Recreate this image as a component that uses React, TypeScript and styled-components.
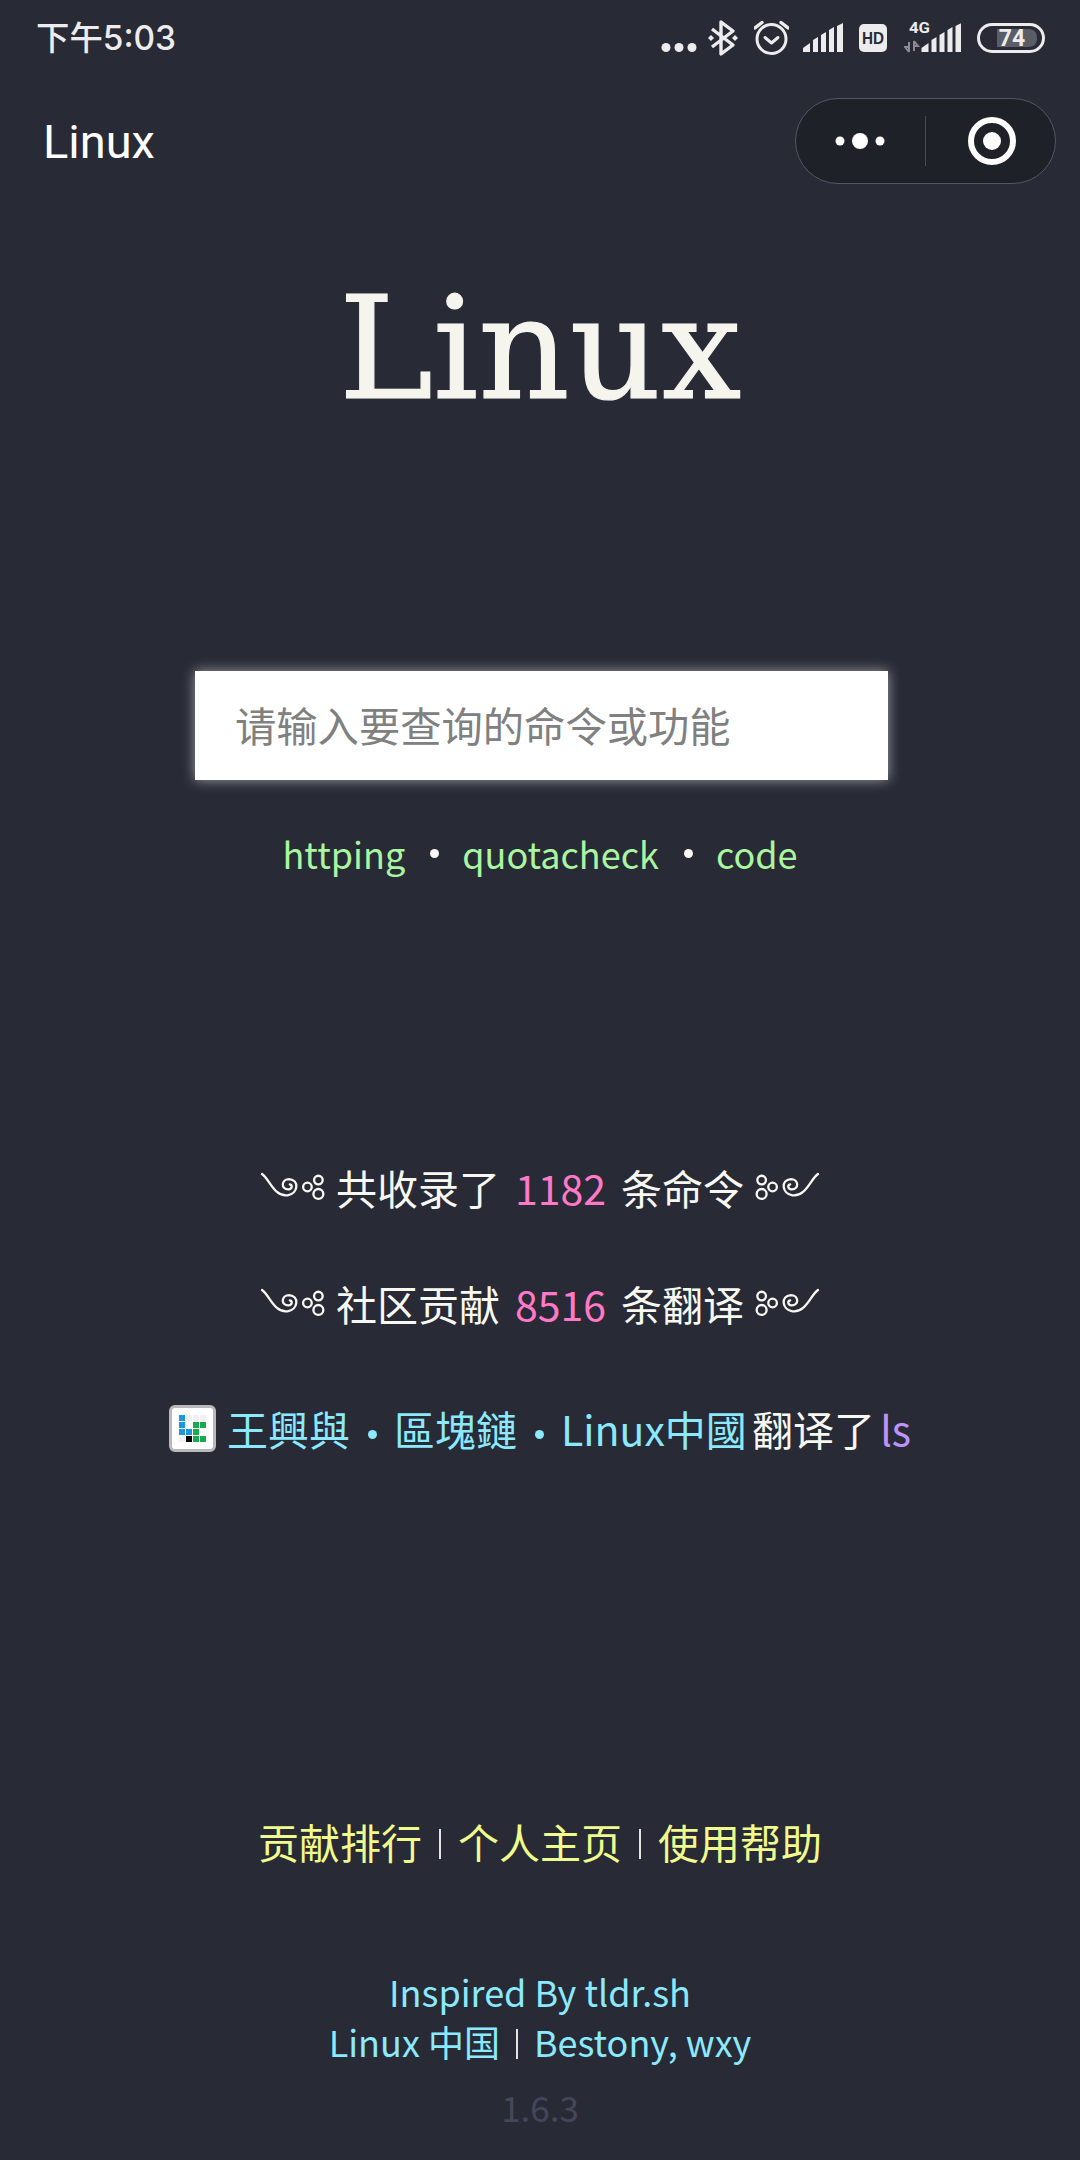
import React from 'react';
import styled, { createGlobalStyle } from 'styled-components';

const CJK = `"Noto Sans CJK SC", "Noto Sans", sans-serif`;

const Global = createGlobalStyle`
  html, body { margin: 0; padding: 0; background: #282a36; }
  * { box-sizing: border-box; }
`;

const Page = styled.div`
  width: 1080px;
  height: 2160px;
  background: #282a36;
  overflow: hidden;
  display: flex;
  flex-direction: column;
  align-items: center;
  font-family: ${CJK};
  color: #f8f8f2;
`;

const StatusBar = styled.div`
  width: 100%;
  height: 76px;
  display: flex;
  align-items: center;
  justify-content: space-between;
  padding: 0 35px 0 36px;
`;

const Clock = styled.div`
  font-family: Inter, ${CJK};
  font-size: 33.4px;
  font-weight: 500;
  color: #ececec;
  line-height: 1;
  padding-top: 2px;
`;

const StatusIcons = styled.div`
  display: flex;
  align-items: center;
  height: 76px;
`;

const StatusSvg = styled.svg<{ $ml: number }>`
  display: block;
  margin-left: ${p => p.$ml}px;
  flex: none;
`;

const NavBar = styled.div`
  width: 100%;
  height: 130px;
  display: flex;
  align-items: flex-start;
  justify-content: space-between;
  padding: 22px 24px 0 43px;
`;

const NavTitle = styled.div`
  font-family: Roboto, sans-serif;
  font-size: 47px;
  line-height: 88px;
  color: #fff;
`;

const Capsule = styled.div`
  width: 261px;
  height: 86px;
  border-radius: 43px;
  border: 1.5px solid #55575f;
  background: #1f2129;
  display: flex;
  align-items: center;
`;

const CapsuleSide = styled.div<{ $pad?: string }>`
  flex: 1;
  height: 100%;
  display: flex;
  align-items: center;
  justify-content: center;
  padding: ${p => p.$pad ?? '0'};
`;

const CapsuleDivider = styled.div`
  width: 1px;
  height: 50px;
  background: #4a4c55;
`;

const Title = styled.h1`
  margin: 58px 0 0;
  font-family: "DejaVu Serif", serif;
  font-weight: 400;
  font-size: 142px;
  line-height: 170px;
  color: #f5f5ee;
  -webkit-text-stroke: 1.2px #f5f5ee;
`;

const SearchBox = styled.div`
  margin: 237px 0 0 3px;
  width: 693px;
  height: 109px;
  background: #fff;
  box-shadow: 0 0 12px rgba(255, 255, 255, 0.55);
  display: flex;
  align-items: center;
  padding: 0 0 3px 40px;
  font-size: 41.3px;
  color: #808080;
`;

const Hints = styled.div`
  margin-top: 45px;
  display: flex;
  align-items: center;
  font-size: 36px;
  line-height: 56px;
  color: #a9f5a0;
`;

const HintDot = styled.span`
  width: 9px;
  height: 9px;
  border-radius: 50%;
  background: #f8f8f2;
  margin: 0 23px 0 25px;
`;

const Stat = styled.div<{ $mt: number }>`
  margin-top: ${p => p.$mt}px;
  display: flex;
  align-items: center;
  font-size: 41px;
  line-height: 60px;
`;

const Num = styled.span`
  color: #ff79c6;
  margin: 0 15px 0 15px;
`;

const FlourishSvg = styled.svg<{ $flip?: boolean }>`
  display: block;
  width: 65px;
  height: 30px;
  margin: ${p => (p.$flip ? '0 0 0 11px' : '0 11px 0 0')};
  transform: ${p => (p.$flip ? 'scaleX(-1)' : 'none')};
`;

const Recent = styled.div`
  margin-top: 65px;
  display: flex;
  align-items: center;
  font-size: 41px;
  line-height: 60px;
  word-spacing: -4px;
`;

const Avatar = styled.div`
  width: 47px;
  height: 47px;
  border: 3px solid #b9b9b9;
  border-radius: 6px;
  background: #fff;
  margin-right: 11px;
  display: grid;
  grid-template-columns: repeat(4, 6px);
  grid-auto-rows: 6px;
  gap: 1px;
  justify-content: center;
  align-content: center;
`;

const Tile = styled.i<{ $c: string }>`
  display: block;
  background: ${p => p.$c};
`;

const Cyan = styled.span`
  color: #8be9fd;
`;

const Sep = styled.span`
  display: inline-block;
  width: 9px;
  height: 9px;
  border-radius: 50%;
  background: #8be9fd;
  margin: 0 17px 0 18px;
  vertical-align: middle;
`;

const Purple = styled.span`
  color: #bd93f9;
`;

const Links = styled.div`
  margin-top: 353px;
  display: flex;
  align-items: center;
  font-size: 41px;
  line-height: 60px;
  color: #f1fa8c;
`;

const VBar = styled.span<{ $h: number; $m: number }>`
  display: inline-block;
  width: 2px;
  height: ${p => p.$h}px;
  background: #e4e4e0;
  margin: 5px ${p => p.$m}px 0;
`;

const Credits = styled.div`
  margin-top: 95px;
  display: flex;
  flex-direction: column;
  align-items: center;
  font-size: 36px;
  line-height: 50px;
  color: #8be9fd;
`;

const CreditRow = styled.div`
  display: flex;
  align-items: center;
`;

const Version = styled.div`
  margin-top: 18px;
  font-size: 35px;
  line-height: 46px;
  color: #44475a;
`;

const Flourish = ({ flip }: { flip?: boolean }) => (
  <FlourishSvg $flip={flip} viewBox="62 92 196 88" fill="none" stroke="#f8f8f2" strokeWidth="7" strokeLinecap="round">
    <path d="M68 97C92 114 105 166 145 161C177 156 182 114 150 112C125 112 124 145 149 143C160 141 160 130 152 128" />
    <circle cx="205" cy="136" r="13" />
    <circle cx="238" cy="115" r="13" />
    <circle cx="238" cy="157" r="15" />
  </FlourishSvg>
);

const Signal = () => (
  <>
    <path d="M0 29V25L7 20V29Z" />
    <path d="M10 29V17L15 14V29Z" />
    <path d="M18 29V12L23 9V29Z" />
    <path d="M26 29V7L31 4V29Z" />
    <path d="M34 29V3L40 0V29Z" />
  </>
);

const tiles = [
  '#1c96e0', '#f1f1f1', '#f1f1f1', '#f1f1f1',
  '#1c96e0', '#ffffff', '#1aa850', '#1aa850',
  '#1c96e0', '#1c96e0', '#1aa850', '#ffffff',
  '#f1f1f1', '#000000', '#1aa850', '#1aa850',
];

export default function App() {
  return (
    <Page>
      <Global />
      <StatusBar>
        <Clock>下午5:03</Clock>
        <StatusIcons>
          <StatusSvg $ml={0} width="36" height="76" viewBox="0 0 36 76" fill="#ececec">
            <circle cx="5" cy="47.5" r="4.5" />
            <circle cx="18" cy="47.5" r="4.5" />
            <circle cx="31" cy="47.5" r="4.5" />
          </StatusSvg>
          <StatusSvg $ml={11} width="30" height="76" viewBox="0 0 30 76" fill="none" stroke="#ececec">
            <path d="M4 29L25 45L13 54V22L25 31L4 47" strokeWidth="3.4" strokeLinejoin="round" />
            <path d="M3 35L6 38L3 41L0 38Z" fill="#ececec" stroke="none" />
            <path d="M27 35L30 38L27 41L24 38Z" fill="#ececec" stroke="none" />
          </StatusSvg>
          <StatusSvg $ml={16} width="35" height="76" viewBox="0 0 35 76" fill="none" stroke="#ececec" strokeWidth="3">
            <circle cx="17.5" cy="39" r="14.5" />
            <path d="M11 37.5L17.5 43L24 37.5" strokeLinecap="round" strokeLinejoin="round" />
            <path d="M1 28L8 22.5M34 28L27 22.5" strokeLinecap="round" strokeWidth="3.4" />
          </StatusSvg>
          <StatusSvg $ml={14} width="40" height="76" viewBox="0 -23 40 76" fill="#ececec">
            <Signal />
          </StatusSvg>
          <StatusSvg $ml={16} width="28" height="76" viewBox="0 0 28 76">
            <rect x="0" y="24" width="28" height="28" rx="5" fill="#ececec" />
            <text x="14" y="44" textAnchor="middle" fontFamily="'Liberation Sans', sans-serif" fontSize="16.5" fontWeight="700" textLength="22" lengthAdjust="spacingAndGlyphs" fill="#282a36">HD</text>
          </StatusSvg>
          <StatusSvg $ml={17} width="57" height="76" viewBox="0 -23 57 76" fill="#ececec">
            <text x="5" y="9.5" fontFamily="Roboto, sans-serif" fontSize="15" fontWeight="700" textLength="21" lengthAdjust="spacingAndGlyphs">4G</text>
            <path d="M5 29V19M5 29L1 24H4" stroke="#8a8c94" strokeWidth="2" fill="none" />
            <path d="M10 18V28M10 18L14 23H11" stroke="#8a8c94" strokeWidth="2" fill="none" />
            <g transform="translate(17.5 0)">
              <Signal />
            </g>
          </StatusSvg>
          <StatusSvg $ml={16} width="68" height="76" viewBox="0 0 68 76">
            <rect x="1.5" y="24.5" width="65" height="27" rx="13.5" fill="none" stroke="#ececec" strokeWidth="3" />
            <path d="M20 29H51C58 29 60 33 60 38C60 43 58 47 51 47H20Z" fill="#5a5c66" />
            <text x="35" y="46" textAnchor="middle" fontFamily="Roboto, sans-serif" fontSize="23" fontWeight="700" fill="#ececec">74</text>
          </StatusSvg>
        </StatusIcons>
      </StatusBar>

      <NavBar>
        <NavTitle>Linux</NavTitle>
        <Capsule>
          <CapsuleSide $pad="0 2px 0 0">
            <svg width="52" height="20" viewBox="0 0 52 20" fill="#fff">
              <circle cx="6" cy="10" r="4.5" />
              <circle cx="26" cy="10" r="8" />
              <circle cx="46" cy="10" r="4.5" />
            </svg>
          </CapsuleSide>
          <CapsuleDivider />
          <CapsuleSide $pad="0 0 0 2px">
            <svg width="48" height="48" viewBox="0 0 48 48">
              <circle cx="24" cy="24" r="21" fill="none" stroke="#fff" strokeWidth="6" />
              <circle cx="24" cy="24" r="9" fill="#fff" />
            </svg>
          </CapsuleSide>
        </Capsule>
      </NavBar>

      <Title>Linux</Title>

      <SearchBox>请输入要查询的命令或功能</SearchBox>

      <Hints>
        <span>httping</span>
        <HintDot />
        <span>quotacheck</span>
        <HintDot />
        <span>code</span>
      </Hints>

      <Stat $mt={276}>
        <Flourish />
        共收录了<Num>1182</Num>条命令
        <Flourish flip />
      </Stat>
      <Stat $mt={56}>
        <Flourish />
        社区贡献<Num>8516</Num>条翻译
        <Flourish flip />
      </Stat>

      <Recent>
        <Avatar>
          {tiles.map((c, i) => (
            <Tile key={i} $c={c} />
          ))}
        </Avatar>
        <span>
          <Cyan>王興與<Sep />區塊鏈<Sep />Linux中國</Cyan> 翻译了 <Purple>ls</Purple>
        </span>
      </Recent>

      <Links>
        贡献排行
        <VBar $h={30} $m={17} />
        个人主页
        <VBar $h={30} $m={17} />
        使用帮助
      </Links>

      <Credits>
        <div>Inspired By tldr.sh</div>
        <CreditRow>
          Linux 中国
          <VBar $h={30} $m={16} />
          Bestony, wxy
        </CreditRow>
      </Credits>

      <Version>1.6.3</Version>
    </Page>
  );
}
